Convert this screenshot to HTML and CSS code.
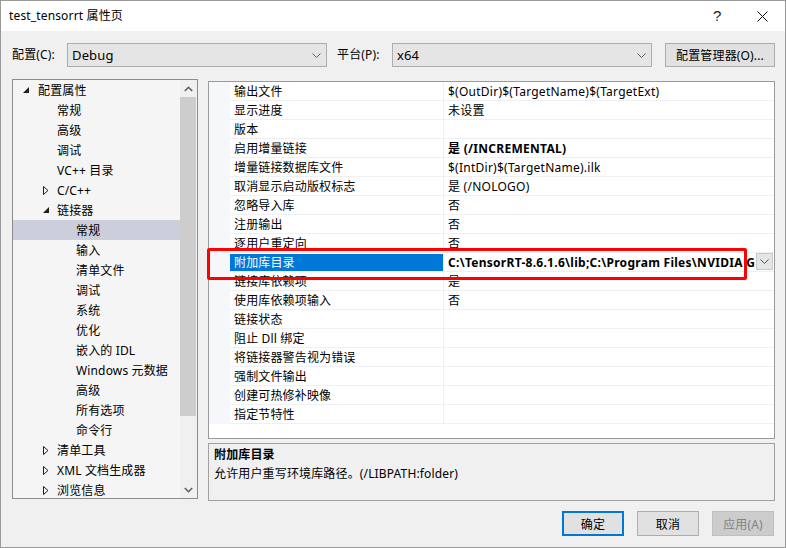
FILE: index.html
```html
<!DOCTYPE html>
<html lang="zh-CN">
<head>
<meta charset="utf-8">
<title>test_tensorrt 属性页</title>
<link rel="stylesheet" href="styles.css">
</head>
<body>
<div class="window">
  <div class="titlebar">
    <span class="title">test_tensorrt 属性页</span>
    <span class="help">?</span>
    <span class="close"><svg width="11" height="11" viewBox="0 0 11 11"><path d="M0.5 0.5L10.5 10.5M10.5 0.5L0.5 10.5" stroke="#111" stroke-width="1" fill="none"/></svg></span>
  </div>

  <div class="config-row">
    <span class="lbl">配置(C):</span>
    <div class="combo"><span>Debug</span><svg class="chev" width="9" height="5" viewBox="0 0 9 5"><path d="M0.5 0.5L4.5 4.5L8.5 0.5" stroke="#606060" fill="none"/></svg></div>
    <span class="lbl lbl2">平台(P):</span>
    <div class="combo"><span>x64</span><svg class="chev" width="9" height="5" viewBox="0 0 9 5"><path d="M0.5 0.5L4.5 4.5L8.5 0.5" stroke="#606060" fill="none"/></svg></div>
    <button class="btn cfgmgr">配置管理器(O)...</button>
  </div>

  <div class="main">
    <div class="tree">
      <div class="tree-list">
        <div class="ti l0"><span class="arr"><svg width="6" height="6" viewBox="0 0 6 6"><path d="M6 0V6H0Z" fill="#1e1e1e"/></svg></span>配置属性</div>
        <div class="ti l1">常规</div>
        <div class="ti l1">高级</div>
        <div class="ti l1">调试</div>
        <div class="ti l1">VC++ 目录</div>
        <div class="ti l1"><span class="arr"><svg width="6" height="9" viewBox="0 0 6 9"><path d="M0.5 0.5L5 4.5L0.5 8.5Z" fill="none" stroke="#1e1e1e"/></svg></span>C/C++</div>
        <div class="ti l1"><span class="arr"><svg width="6" height="6" viewBox="0 0 6 6"><path d="M6 0V6H0Z" fill="#1e1e1e"/></svg></span>链接器</div>
        <div class="ti l2 sel">常规</div>
        <div class="ti l2">输入</div>
        <div class="ti l2">清单文件</div>
        <div class="ti l2">调试</div>
        <div class="ti l2">系统</div>
        <div class="ti l2">优化</div>
        <div class="ti l2">嵌入的 IDL</div>
        <div class="ti l2">Windows 元数据</div>
        <div class="ti l2">高级</div>
        <div class="ti l2">所有选项</div>
        <div class="ti l2">命令行</div>
        <div class="ti l1"><span class="arr"><svg width="6" height="9" viewBox="0 0 6 9"><path d="M0.5 0.5L5 4.5L0.5 8.5Z" fill="none" stroke="#1e1e1e"/></svg></span>清单工具</div>
        <div class="ti l1"><span class="arr"><svg width="6" height="9" viewBox="0 0 6 9"><path d="M0.5 0.5L5 4.5L0.5 8.5Z" fill="none" stroke="#1e1e1e"/></svg></span>XML 文档生成器</div>
        <div class="ti l1"><span class="arr"><svg width="6" height="9" viewBox="0 0 6 9"><path d="M0.5 0.5L5 4.5L0.5 8.5Z" fill="none" stroke="#1e1e1e"/></svg></span>浏览信息</div>
      </div>
      <div class="vscroll">
        <div class="sb-btn"><svg width="9" height="6" viewBox="0 0 9 6"><path d="M0.8 5L4.5 1.3L8.2 5" stroke="#606060" stroke-width="1.6" fill="none"/></svg></div>
        <div class="sb-thumb"></div>
        <div class="sb-track"></div>
        <div class="sb-btn"><svg width="9" height="6" viewBox="0 0 9 6"><path d="M0.8 1L4.5 4.7L8.2 1" stroke="#606060" stroke-width="1.6" fill="none"/></svg></div>
      </div>
    </div>

    <div class="right">
      <div class="grid">
        <div class="row"><div class="gut"></div><div class="nm">输出文件</div><div class="val">$(OutDir)$(TargetName)$(TargetExt)</div></div>
        <div class="row"><div class="gut"></div><div class="nm">显示进度</div><div class="val">未设置</div></div>
        <div class="row"><div class="gut"></div><div class="nm">版本</div><div class="val"></div></div>
        <div class="row"><div class="gut"></div><div class="nm">启用增量链接</div><div class="val b">是 (/INCREMENTAL)</div></div>
        <div class="row"><div class="gut"></div><div class="nm">增量链接数据库文件</div><div class="val">$(IntDir)$(TargetName).ilk</div></div>
        <div class="row"><div class="gut"></div><div class="nm">取消显示启动版权标志</div><div class="val">是 (/NOLOGO)</div></div>
        <div class="row"><div class="gut"></div><div class="nm">忽略导入库</div><div class="val">否</div></div>
        <div class="row"><div class="gut"></div><div class="nm">注册输出</div><div class="val">否</div></div>
        <div class="row"><div class="gut"></div><div class="nm">逐用户重定向</div><div class="val">否</div></div>
        <div class="row active"><div class="gut"></div><div class="nm">附加库目录</div><div class="val b"><span class="clip">C:\TensorRT-8.6.1.6\lib;C:\Program Files\NVIDIA G</span><span class="ddbtn"><svg width="9" height="5" viewBox="0 0 9 5"><path d="M0.5 0.5L4.5 4.5L8.5 0.5" stroke="#505050" fill="none"/></svg></span></div></div>
        <div class="row"><div class="gut"></div><div class="nm">链接库依赖项</div><div class="val">是</div></div>
        <div class="row"><div class="gut"></div><div class="nm">使用库依赖项输入</div><div class="val">否</div></div>
        <div class="row"><div class="gut"></div><div class="nm">链接状态</div><div class="val"></div></div>
        <div class="row"><div class="gut"></div><div class="nm">阻止 Dll 绑定</div><div class="val"></div></div>
        <div class="row"><div class="gut"></div><div class="nm">将链接器警告视为错误</div><div class="val"></div></div>
        <div class="row"><div class="gut"></div><div class="nm">强制文件输出</div><div class="val"></div></div>
        <div class="row"><div class="gut"></div><div class="nm">创建可热修补映像</div><div class="val"></div></div>
        <div class="row"><div class="gut"></div><div class="nm">指定节特性</div><div class="val"></div></div>
      </div>
      <div class="desc">
        <div class="desc-title">附加库目录</div>
        <div class="desc-text">允许用户重写环境库路径。(/LIBPATH:folder)</div>
      </div>
    </div>
  </div>

  <div class="footer">
    <button class="btn fbtn default">确定</button>
    <button class="btn fbtn">取消</button>
    <button class="btn fbtn disabled">应用(A)</button>
  </div>

  <div class="annot"></div>
</div>
</body>
</html>
```

FILE: styles.css
```css
* { box-sizing: border-box; }
html, body { margin: 0; padding: 0; }
body {
  width: 786px;
  height: 548px;
  overflow: hidden;
  background: #f0f0f0;
  font-family: "Noto Sans", "Noto Sans CJK SC", sans-serif;
  font-size: 12px;
  letter-spacing: 0.15px;
  color: #000;
}
.window {
  position: relative;
  width: 786px;
  height: 548px;
  border: 1px solid #9a9a9a;
  background: #f0f0f0;
  display: flex;
  flex-direction: column;
}
.titlebar {
  height: 30px;
  background: #fff;
  display: flex;
  align-items: center;
  padding-left: 8px;
}
.title { flex: 1; font-size: 12px; line-height: 16px; }
.help { width: 44px; font-size: 15px; line-height: 16px; color: #222; font-family: "Liberation Sans", sans-serif; }
.close { width: 28px; display: flex; align-items: center; }

.config-row {
  display: flex;
  align-items: center;
  margin-top: 12px;
  padding-left: 11px;
  height: 24px;
}
.lbl { width: 55px; line-height: 16px; }
.lbl2 { margin-left: 10px; }
.combo {
  width: 260px;
  height: 24px;
  border: 1px solid #adadad;
  background: #e5e5e5;
  display: flex;
  align-items: center;
  justify-content: space-between;
  padding: 0 5px 0 4px;
  font-size: 13px;
}
.btn {
  font-family: inherit;
  font-size: 12px;
  letter-spacing: inherit;
  color: #000;
  background: #e1e1e1;
  border: 1px solid #adadad;
  padding: 0;
  margin: 0;
}
.cfgmgr { margin-left: 13px; width: 110px; height: 24px; }

.main {
  display: flex;
  margin-top: 12px;
  padding-left: 11px;
}
.tree {
  width: 186px;
  height: 420px;
  border: 1px solid #8c8c8c;
  background: #f5f5f5;
  display: flex;
  overflow: hidden;
}
.tree-list { width: 167px; }
.ti {
  height: 20px;
  line-height: 18px;
  padding-top: 2px;
  white-space: nowrap;
  display: flex;
  align-items: center;
  position: relative;
}
.ti.l0 { padding-left: 25px; }
.ti.l1 { padding-left: 44px; }
.ti.l2 { padding-left: 63px; }
.ti .arr {
  position: absolute;
  top: 0;
  display: flex;
  align-items: center;
  height: 20px;
}
.ti.l0 .arr { left: 10px; }
.ti.l1 .arr { left: 30px; }
.ti.sel { background: #cccedb; }
.vscroll {
  width: 17px;
  display: flex;
  flex-direction: column;
  background: #f0f0f0;
}
.sb-btn { height: 17px; display: flex; align-items: center; justify-content: center; }
.sb-thumb { height: 319px; margin: 0 1px 0 0; background: #cdcdcd; }
.sb-track { flex: 1; }

.right { margin-left: 10px; width: 567px; display: flex; flex-direction: column; }
.grid {
  margin-top: 2px;
  height: 358px;
  border: 1px solid #9a9a9a;
  background: #fff;
  overflow: hidden;
}
.row { display: flex; height: 19px; }
.gut { width: 21px; background: #f5f7fb; }
.nm {
  width: 214px;
  padding-left: 4px;
  padding-top: 1px;
  line-height: 17px;
  border-bottom: 1px solid #eef0f4;
  border-right: 1px solid #eef0f4;
  white-space: nowrap;
}
.val {
  flex: 1;
  padding-left: 4px;
  padding-top: 1px;
  line-height: 17px;
  border-bottom: 1px solid #eef0f4;
  white-space: nowrap;
  overflow: hidden;
  display: flex;
  letter-spacing: 0.25px;
}
.val.b { font-weight: bold; letter-spacing: 0.28px; }
.row.active .nm { background: #0078d7; color: #fff; border-top: 1px solid #fff; padding-top: 0; line-height: 17px; }
.clip { flex: 1; overflow: hidden; }
.ddbtn {
  width: 17px;
  height: 17px;
  margin-top: -1px;
  background: #e5e5e5;
  border: 1px solid #c9c9c9;
  display: flex;
  align-items: center;
  justify-content: center;
  margin-right: 1px;
}
.desc {
  margin-top: 4px;
  height: 58px;
  border: 1px solid #a0a0a0;
  padding: 2px 0 0 5px;
}
.desc-title { font-weight: bold; line-height: 18px; }
.desc-text { line-height: 19px; }

.footer {
  display: flex;
  justify-content: flex-end;
  gap: 13px;
  margin-top: 10px;
  padding-right: 11px;
}
.fbtn { width: 62px; height: 25px; }
.fbtn.default { border: 2px solid #0078d7; }
.fbtn.disabled { background: #cccccc; border-color: #bfbfbf; color: #838383; }

.annot {
  position: absolute;
  left: 206px;
  top: 247px;
  width: 540px;
  height: 32px;
  border: 3px solid #f00;
  border-radius: 2px;
  pointer-events: none;
}
```
